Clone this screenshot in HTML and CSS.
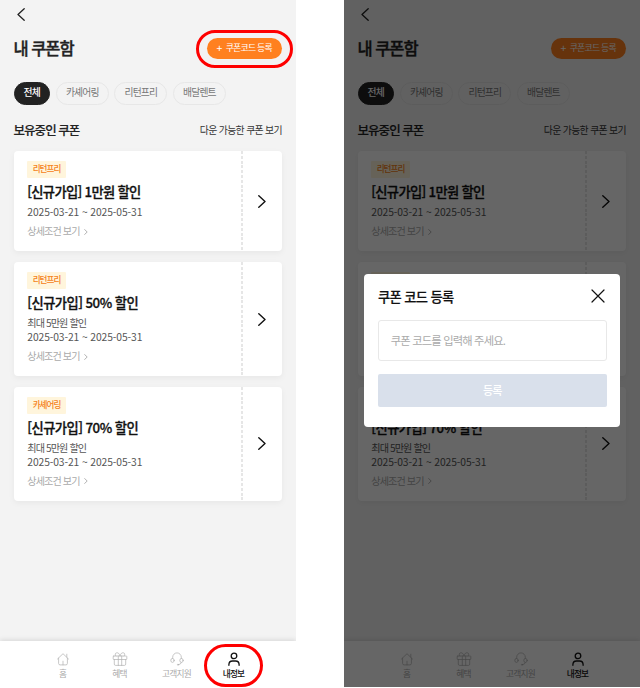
FILE: index.html
```
<!DOCTYPE html>
<html lang="ko">
<head>
<meta charset="utf-8">
<title>내 쿠폰함</title>
<link rel="stylesheet" href="styles.css">
</head>
<body>
<svg width="0" height="0" class="defs" aria-hidden="true">
  <symbol id="back" viewBox="0 0 8 13"><path d="M7.2.7 1 6.5l6.2 5.8"/></symbol>
  <symbol id="next" viewBox="0 0 8 13"><path d="M.8.8 7 6.5.8 12.2"/></symbol>
  <symbol id="more" viewBox="0 0 4 6"><path d="M.6.5 3.2 3 .6 5.5"/></symbol>
  <symbol id="close" viewBox="0 0 14 14"><path d="M1 1l12 12M13 1 1 13"/></symbol>
  <symbol id="home" viewBox="0 0 14 14"><path d="M1.5 7 7 1.7 12.500 7M2.600 6.200v5.200q0 1.500 1.500 1.500h5.800q1.500 0 1.500-1.500V6.200M10.800 5V2.200M7 9.200v3.700"/></symbol>
  <symbol id="gift" viewBox="0 0 16 14"><path d="M1.800 4h12.400q.6 0 .6.600v2.300q0 .6-.6.600H1.800q-.6 0-.6-.6V4.600q0-.6.600-.6zM2.300 7.500v4.600q0 1.300 1.300 1.300h8.800q1.300 0 1.300-1.300V7.500M6.300 4v9.400M9.700 4v9.400M8 3.800C7.300 1.300 6 .6 4.700.8 3 1 2.700 3 3.900 4M8 3.800C8.700 1.300 10 .6 11.300.8 13 1 13.300 3 12.100 4"/></symbol>
  <symbol id="support" viewBox="0 0 14 14"><path d="M2.700 6.500V5.200a4.300 4.300 0 0 1 8.600 0v1.300M11.300 10.500q-.3 2-2.600 2.200"/><ellipse cx="2.500" cy="8.400" rx="1.700" ry="2"/><ellipse cx="11.500" cy="8.400" rx="1.700" ry="2"/><circle cx="8" cy="12.700" r=".6"/></symbol>
  <symbol id="user" viewBox="0 0 14 14"><circle cx="7" cy="3.900" r="2.800"/><path d="M1.900 13.300v-.7q0-3.600 3.600-3.600h3q3.600 0 3.600 3.600v.7"/></symbol>
</svg>
<div class="board">
  <section class="phone">
    <header class="topbar"><svg class="back"><use href="#back"/></svg></header>
    <div class="heading"><h1>내 쿠폰함</h1><button class="register ringed"><i>+</i>쿠폰코드 등록</button></div>
    <div class="chips"><span class="chip on">전체</span><span class="chip">카셰어링</span><span class="chip">리턴프리</span><span class="chip">배달렌트</span></div>
    <div class="subhead"><h2>보유중인 쿠폰</h2><a>다운 가능한 쿠폰 보기</a></div>
    <div class="coupons">
      <article class="coupon"><div class="info"><span class="tag">리턴프리</span><h3>[신규가입] 1만원 할인</h3><p class="date">2025-03-21 ~ 2025-05-31</p><p class="detail">상세조건 보기<svg><use href="#more"/></svg></p></div><div class="go"><svg><use href="#next"/></svg></div></article>
      <article class="coupon"><div class="info"><span class="tag">리턴프리</span><h3 class="pct">[신규가입] 50% 할인</h3><p class="desc">최대 5만원 할인</p><p class="date">2025-03-21 ~ 2025-05-31</p><p class="detail">상세조건 보기<svg><use href="#more"/></svg></p></div><div class="go"><svg><use href="#next"/></svg></div></article>
      <article class="coupon"><div class="info"><span class="tag">카셰어링</span><h3 class="pct">[신규가입] 70% 할인</h3><p class="desc">최대 5만원 할인</p><p class="date">2025-03-21 ~ 2025-05-31</p><p class="detail">상세조건 보기<svg><use href="#more"/></svg></p></div><div class="go"><svg><use href="#next"/></svg></div></article>
    </div>
    <nav class="tabs">
      <a class="tab"><svg><use href="#home"/></svg><span>홈</span></a>
      <a class="tab"><svg class="wide"><use href="#gift"/></svg><span>혜택</span></a>
      <a class="tab"><svg><use href="#support"/></svg><span>고객지원</span></a>
      <a class="tab active ringed"><svg><use href="#user"/></svg><span>내정보</span></a>
    </nav>
  </section>
  <section class="phone">
    <header class="topbar"><svg class="back"><use href="#back"/></svg></header>
    <div class="heading"><h1>내 쿠폰함</h1><button class="register"><i>+</i>쿠폰코드 등록</button></div>
    <div class="chips"><span class="chip on">전체</span><span class="chip">카셰어링</span><span class="chip">리턴프리</span><span class="chip">배달렌트</span></div>
    <div class="subhead"><h2>보유중인 쿠폰</h2><a>다운 가능한 쿠폰 보기</a></div>
    <div class="coupons">
      <article class="coupon"><div class="info"><span class="tag">리턴프리</span><h3>[신규가입] 1만원 할인</h3><p class="date">2025-03-21 ~ 2025-05-31</p><p class="detail">상세조건 보기<svg><use href="#more"/></svg></p></div><div class="go"><svg><use href="#next"/></svg></div></article>
      <article class="coupon behind"><div class="info"><span class="tag"></span></div><div class="go"></div></article>
      <article class="coupon"><div class="info"><span class="tag"></span><h3 class="pct">[신규가입] 70% 할인</h3><p class="desc">최대 5만원 할인</p><p class="date">2025-03-21 ~ 2025-05-31</p><p class="detail">상세조건 보기<svg><use href="#more"/></svg></p></div><div class="go"><svg><use href="#next"/></svg></div></article>
    </div>
    <nav class="tabs">
      <a class="tab"><svg><use href="#home"/></svg><span>홈</span></a>
      <a class="tab"><svg class="wide"><use href="#gift"/></svg><span>혜택</span></a>
      <a class="tab"><svg><use href="#support"/></svg><span>고객지원</span></a>
      <a class="tab active"><svg><use href="#user"/></svg><span>내정보</span></a>
    </nav>
    <div class="overlay">
      <div class="modal">
        <div class="modal-head"><h2>쿠폰 코드 등록</h2><svg><use href="#close"/></svg></div>
        <div class="field">쿠폰 코드를 입력해 주세요.</div>
        <button class="submit">등록</button>
      </div>
    </div>
  </section>
</div>
</body>
</html>
```
FILE: styles.css
```
* { box-sizing: border-box; margin: 0; padding: 0; }
body { background: #fff; font-family: "Noto Sans CJK KR", sans-serif; color: #222; overflow: hidden; }
svg { display: block; fill: none; stroke: currentColor; stroke-linecap: round; stroke-linejoin: round; }
.defs { position: absolute; }
button { border: 0; font-family: inherit; }
.board { display: flex; justify-content: space-between; width: 640px; height: 688px; }
.phone { position: relative; display: flex; flex-direction: column; width: 296px; height: 687px; background: #f3f3f3; overflow: hidden; }
.topbar { height: 28px; padding: 8px 0 0 17px; }
.back { width: 8px; height: 13px; stroke-width: 1.3; }
.heading { display: flex; justify-content: space-between; align-items: center; height: 41px; padding: 0 14px 0 13.500px; }
h1 { font-size: 16.500px; line-height: 24px; font-weight: 500; letter-spacing: -1.050px; -webkit-text-stroke: .35px; margin-top: -2px; }
.register { display: flex; align-items: center; justify-content: center; width: 75.500px; height: 21px; padding-bottom: 1px; border-radius: 11px; background: #ff801f; color: #fff; font-size: 8.900px; line-height: 20px; letter-spacing: -.75px; white-space: nowrap; }
.register i { margin-right: 4px; font-style: normal; font-size: 10.500px; }
.ringed { position: relative; }
.ringed::after { content: ""; position: absolute; border: 3px solid #fe0000; }
.register.ringed::after { inset: -8px -11px -8.500px -10.500px; border-radius: 19px; }
.chips { display: flex; gap: 5.900px; margin-top: 12.500px; padding-left: 13.500px; }
.chip { width: 52.700px; height: 23px; border: 1px solid #e7e7e7; border-radius: 12px; color: #777; font-size: 9.800px; line-height: 19px; letter-spacing: -.85px; text-align: center; }
.chip.on { width: 36.500px; border-color: #222; background: #222; color: #fff; font-weight: 500; }
.subhead { display: flex; justify-content: space-between; align-items: center; height: 20px; margin-top: 15.500px; padding: 0 14px 0 13.500px; }
.subhead h2 { font-size: 12.500px; line-height: 20px; font-weight: 500; letter-spacing: -.95px; -webkit-text-stroke: .15px; }
.subhead a { font-size: 9.900px; letter-spacing: -.65px; color: #333; }
.coupons { display: flex; flex-direction: column; gap: 11px; margin-top: 11px; padding: 0 14px; }
.coupon { display: flex; border-radius: 4px; background: #fff; box-shadow: 0 2px 6px rgba(0,0,0,.05); }
.coupon:last-child { margin-top: -.5px; }
.behind { height: 114px; }
.info { flex: 1; padding: 10px 0 13px 13.300px; }
.tag { display: block; width: 38.500px; height: 17px; border-radius: 1px; background: #fff5dc; color: #f58220; font-size: 8.600px; line-height: 15px; letter-spacing: -.95px; text-align: center; font-weight: 500; }
h3 { height: 16px; margin: 6px 0 5px; font-size: 13.300px; line-height: 15px; font-weight: 500; letter-spacing: -.7px; -webkit-text-stroke: .3px; color: #111; white-space: nowrap; }
h3.pct { letter-spacing: -.55px; }
.date, .desc, .detail { height: 14px; line-height: 14px; color: #555; }
.date { font-size: 10.300px; letter-spacing: -.1px; }
.desc { font-size: 10.100px; letter-spacing: -.9px; }
.detail { display: flex; align-items: center; gap: 4.500px; margin-top: 5px; font-size: 10.100px; letter-spacing: -.9px; color: #aaa; }
.detail svg { width: 4px; height: 6px; stroke-width: .9; margin-top: 1px; }
.go { display: flex; align-items: center; justify-content: center; width: 41px; background: repeating-linear-gradient(#e6e6e6 0 3px, #fff 3px 4.800px) left / 2px 100% no-repeat; }
.go svg { width: 8px; height: 13px; stroke-width: 1.400; color: #111; }
.tabs { display: flex; height: 46px; margin-top: auto; padding: 0 34px; background: #fff; box-shadow: 0 -1px 5px rgba(0,0,0,.12); }
.tab { display: flex; flex-direction: column; align-items: center; width: 57px; padding-top: 11px; color: #aaa; font-size: 8.700px; line-height: 14px; letter-spacing: -.8px; }
.tab svg { width: 14px; height: 14px; stroke-width: .7; margin-bottom: 1px; color: #b0b0b0; }
.tab svg.wide { width: 16px; }
.tab.active { color: #111; font-weight: 500; }
.tab.active svg { stroke-width: 1.300; color: #111; }
.tab.ringed::after { inset: 3px -1px 0 -1px; border-radius: 22px; }
.overlay { position: absolute; inset: 0; display: flex; flex-direction: column; align-items: center; padding-top: 273.500px; background: rgba(0,0,0,.6); }
.modal { width: 256px; height: 153.500px; padding: 13px 13.500px 0 14px; border-radius: 4px; background: #fff; }
.modal-head { display: flex; justify-content: space-between; align-items: center; height: 20px; }
.modal-head h2 { font-size: 13.300px; line-height: 20px; font-weight: 500; letter-spacing: -.65px; -webkit-text-stroke: .2px; color: #111; }
.modal-head svg { width: 14px; height: 14px; margin: -2px 2px 0 0; stroke-width: 1.200; color: #111; }
.field { height: 40.500px; margin-top: 13.500px; padding-left: 11.800px; border: 1px solid #e8e8e8; border-radius: 3px; color: #aaa; font-size: 11.300px; line-height: 38px; letter-spacing: -.85px; }
.submit { display: block; width: 100%; height: 32.500px; margin-top: 13.500px; border-radius: 2px; background: #d9e0eb; color: #fff; font-size: 11px; line-height: 31px; letter-spacing: -.8px; font-weight: 500; }
```
